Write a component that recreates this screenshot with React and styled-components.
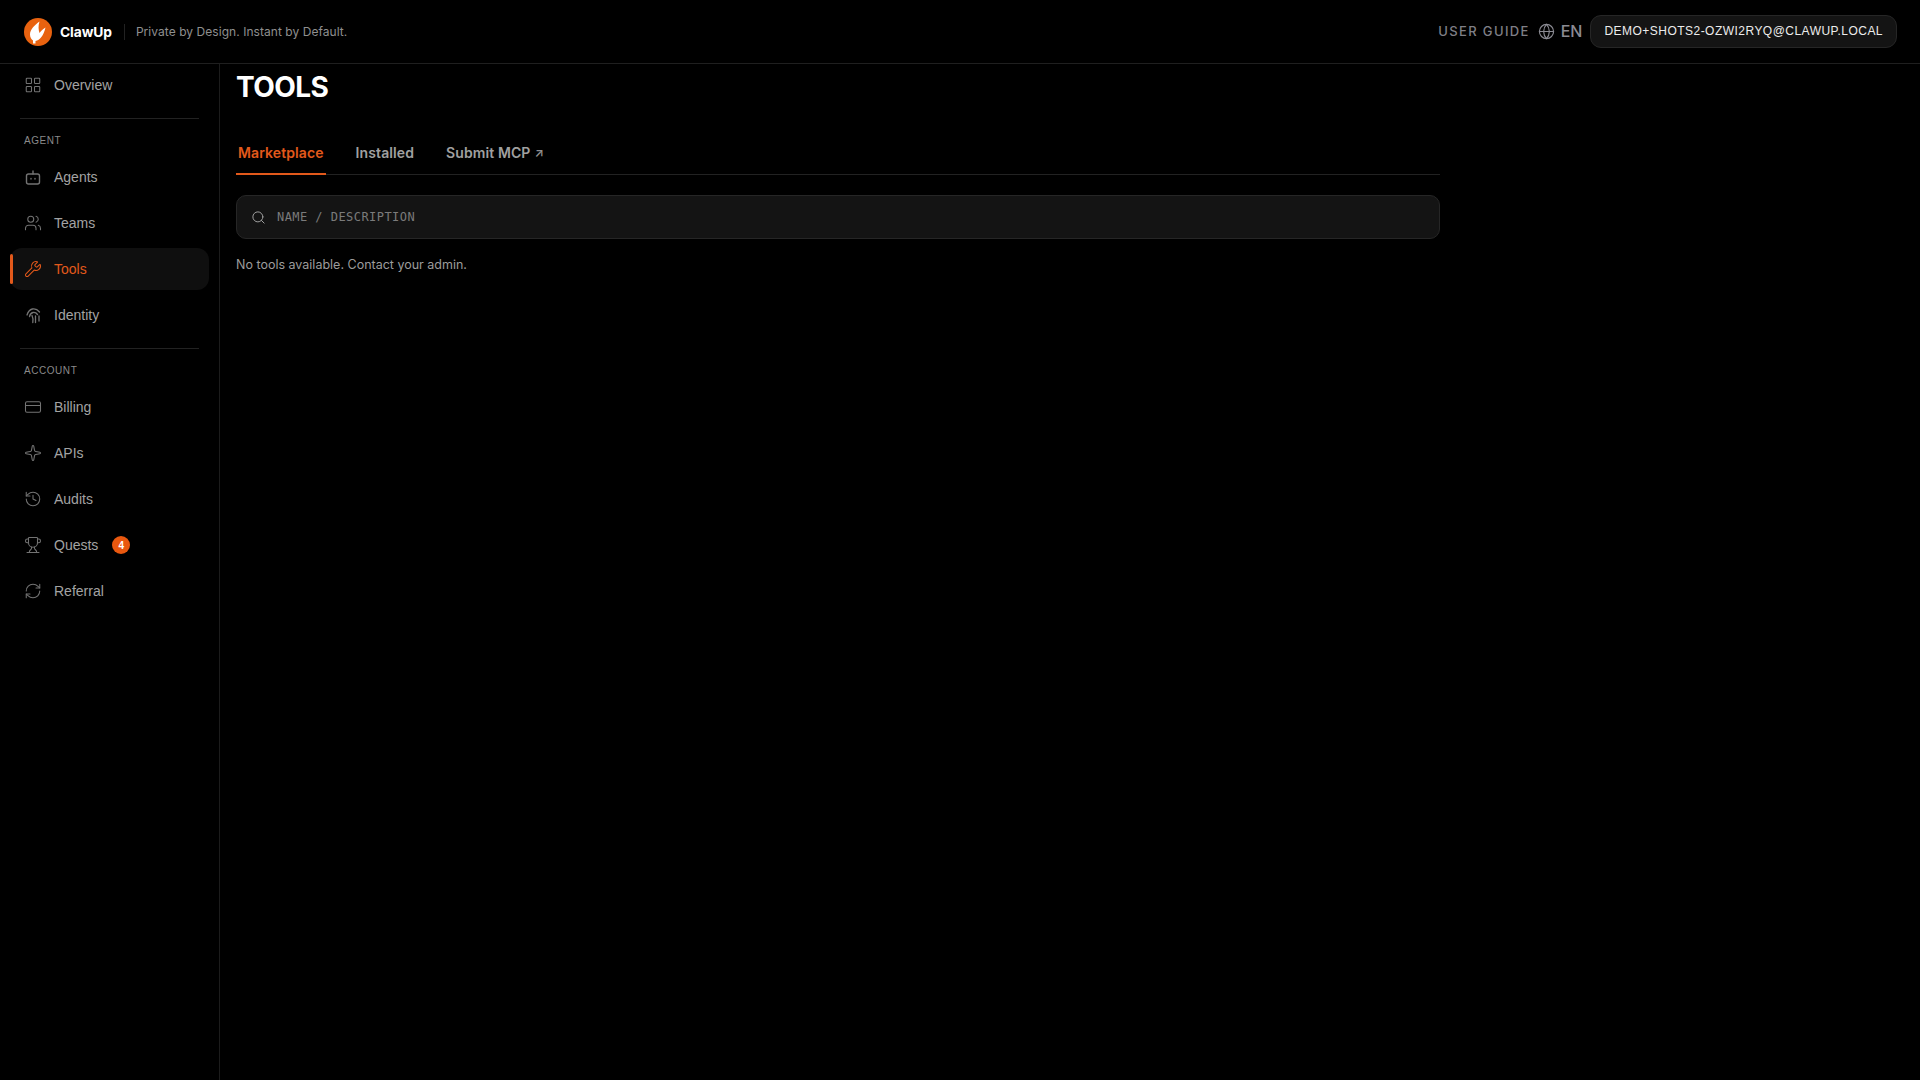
import React from "react";
import styled, { createGlobalStyle } from "styled-components";
import {
  LayoutGrid, Users, Wrench, CreditCard, Sparkle, History, Trophy, RefreshCw, Globe, Search,
} from "lucide-react";

const Global = createGlobalStyle`
  html, body { margin: 0; padding: 0; background: #000; }
  * { box-sizing: border-box; }
  #root { height: 1080px; overflow: hidden; }
`;

const Page = styled.div`
  height: 1080px; display: flex; flex-direction: column; background: #000; color: #fff;
  font-family: Inter, "Liberation Sans", sans-serif;
`;
const Header = styled.header`
  height: 64px; flex: none; display: flex; align-items: center; justify-content: space-between;
  padding: 0 24px; border-bottom: 1px solid #1f1f1f;
`;
const Brand = styled.div`display: flex; align-items: center;`;
const BrandName = styled.span`
  margin-left: 8px; font-size: 13.8px; font-weight: 700; letter-spacing: -0.1px; color: #fff;
`;
const Sep = styled.span`width: 1px; height: 16px; background: #222; margin: 0 11px 0 12px;`;
const Tagline = styled.span`font-size: 12px; color: #8f8f8f; letter-spacing: 0.05px;`;
const HeaderRight = styled.div`display: flex; align-items: center; margin-right: -1px;`;
const Guide = styled.span`
  font-size: 13px; letter-spacing: 1.35px; color: #7f7f86; font-weight: 500; margin-right: 8px; padding-bottom: 2px;
`;
const Lang = styled.span`
  display: flex; align-items: center; gap: 6px; color: #8b8b93; font-size: 16px; font-weight: 500; margin-right: 8px;
  padding-bottom: 1px;
`;
const Account = styled.div`
  height: 33px; display: flex; align-items: center; padding: 0 13px 1px; border-radius: 11px;
  background: #141414; border: 1px solid #262626; color: #ececec;
  font-family: "Liberation Sans", Arial, sans-serif; font-size: 12px; letter-spacing: 0.47px;
`;
const Body = styled.div`flex: 1; display: flex; min-height: 0;`;
const Sidebar = styled.aside`
  width: 220px; flex: none; border-right: 1px solid #1c1c1c; padding: 0 10px;
  display: flex; flex-direction: column;
`;
const Item = styled.div`
  position: relative; height: 42px; flex: none; display: flex; align-items: center; gap: 12px;
  padding-left: 14px; border-radius: 12px; margin-bottom: 4px;
  font-family: "Liberation Sans", Arial, sans-serif; font-size: 14px;
  color: ${(p) => (p.$active ? "#e2591b" : "#a3a3a3")};
  background: ${(p) => (p.$active ? "#0f0f0f" : "transparent")};
  svg { color: ${(p) => (p.$active ? "#e2591b" : "#737373")}; flex: none; }
  ${(p) => p.$active && `
    &::before { content: ""; position: absolute; left: 0; top: 6px; bottom: 6px; width: 3px;
      border-radius: 2px; background: #e2591b; }
  `}
`;
const Divider = styled.div`height: 1px; background: #222; margin: 8px 10px 15px;`;
const Label = styled.div`
  height: 13px; line-height: 13px; padding-left: 14px; margin-bottom: 9px;
  font-family: "Liberation Sans", Arial, sans-serif; font-size: 10px; letter-spacing: 0.55px; color: #8a8a8a;
`;
const Badge = styled.span`
  width: 18px; height: 18px; border-radius: 50%; margin-left: 2px; background: #e9580f; color: #fff;
  display: flex; align-items: center; justify-content: center; font-size: 10px; font-weight: 700;
`;
const Main = styled.main`flex: 1; padding: 0 16px; min-width: 0;`;
const Content = styled.div`width: 1204px;`;
const Title = styled.h1`
  margin: 0; height: 46px; line-height: 46px; font-size: 28px; font-weight: 700; letter-spacing: -0.6px; color: #fff;
`;
const Tabs = styled.div`
  margin-top: 24px; height: 41px; display: flex; gap: 28px; border-bottom: 1px solid #222;
`;
const Tab = styled.div`
  height: 41px; padding: 0 2px 3px; display: flex; align-items: center; gap: 4px; font-size: 14px; font-weight: 600;
  letter-spacing: 0.1px;
  color: ${(p) => (p.$active ? "#e2591b" : "#a0a0a0")};
  border-bottom: 2px solid ${(p) => (p.$active ? "#e2591b" : "transparent")};
`;
const Arrow = styled.span`font-size: 12px; color: #8f8f8f;`;
const SearchBox = styled.div`
  margin-top: 20px; height: 44px; display: flex; align-items: center; gap: 11px; padding: 0 14px;
  background: #141414; border: 1px solid #262626; border-radius: 10px; color: #a0a0a0;
`;
const Placeholder = styled.span`
  font-family: "DejaVu Sans Mono", monospace; font-size: 12px; color: #7b7b7b; letter-spacing: 0.45px;
`;
const Empty = styled.p`margin: 18px 0 0; font-size: 12.5px; line-height: 16px; color: #9c9c9c;`;

const Logo = () => (
  <svg width="28" height="28" viewBox="0 0 28 28">
    <circle cx="14" cy="14" r="14" fill="#e8620f" />
    <path fill="#fff" d="M15.5 3.5C11 7 6 11 6 16.5c0 3 1.5 5 3 6v3h2.5V23c4.5-1 8-5 10-13.500-2.500 1.500-4.500 3.500-6 5.500-1-3-1.500-7 0-11.500z" />
  </svg>
);

const BotIcon = () => (
  <svg width="18" height="18" viewBox="0 0 18 18" fill="none" stroke="currentColor" strokeWidth="1.4" strokeLinecap="round" strokeLinejoin="round">
    <rect x="2.500" y="6" width="13" height="10" rx="2" />
    <path d="M9 6V3" />
    <path d="M7 10.500v.5M11 10.500v.5" />
  </svg>
);

const PrintIcon = () => (
  <svg width="18" height="18" viewBox="0 0 18 18" fill="none" stroke="currentColor" strokeWidth="1.3" strokeLinecap="round">
    <path d="M3 9C5 2.500 11 .5 15.500 6" />
    <path d="M5.500 10.500C6.500 6 11 5 13.500 8.500" />
    <path d="M8 9.500c1 2 1.200 4 .8 7" />
    <path d="M11.500 10v6.500" />
    <path d="M15 10v5" />
  </svg>
);

const I = { size: 18, strokeWidth: 1.4 };

export default function App() {
  return (
    <Page>
      <Global />
      <Header>
        <Brand>
          <Logo />
          <BrandName>ClawUp</BrandName>
          <Sep />
          <Tagline>Private by Design. Instant by Default.</Tagline>
        </Brand>
        <HeaderRight>
          <Guide>USER GUIDE</Guide>
          <Lang><Globe size={17} strokeWidth={1.6} />EN</Lang>
          <Account>DEMO+SHOTS2-OZWI2RYQ@CLAWUP.LOCAL</Account>
        </HeaderRight>
      </Header>
      <Body>
        <Sidebar>
          <Item><LayoutGrid {...I} />Overview</Item>
          <Divider />
          <Label>AGENT</Label>
          <Item><BotIcon />Agents</Item>
          <Item><Users {...I} />Teams</Item>
          <Item $active><Wrench {...I} />Tools</Item>
          <Item><PrintIcon />Identity</Item>
          <Divider />
          <Label>ACCOUNT</Label>
          <Item><CreditCard {...I} />Billing</Item>
          <Item><Sparkle {...I} />APIs</Item>
          <Item><History {...I} />Audits</Item>
          <Item><Trophy {...I} />Quests<Badge>4</Badge></Item>
          <Item><RefreshCw {...I} />Referral</Item>
        </Sidebar>
        <Main>
          <Content>
            <Title>TOOLS</Title>
            <Tabs>
              <Tab $active>Marketplace</Tab>
              <Tab>Installed</Tab>
              <Tab>Submit MCP <Arrow>↗</Arrow></Tab>
            </Tabs>
            <SearchBox>
              <Search size={15} strokeWidth={1.6} />
              <Placeholder>NAME / DESCRIPTION</Placeholder>
            </SearchBox>
            <Empty>No tools available. Contact your admin.</Empty>
          </Content>
        </Main>
      </Body>
    </Page>
  );
}
